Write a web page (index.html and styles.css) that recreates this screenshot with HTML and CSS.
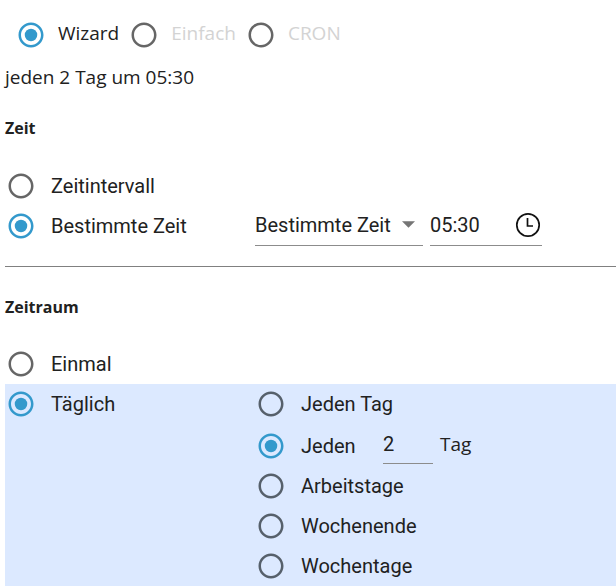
FILE: index.html
```html
<!DOCTYPE html>
<html lang="de">
<head>
<meta charset="utf-8">
<title>Zeitplan</title>
<link rel="stylesheet" href="styles.css">
</head>
<body>
<svg class="symbols" aria-hidden="true">
  <symbol id="radio" viewBox="0 0 24 24">
    <path d="M12 2C6.48 2 2 6.48 2 12s4.48 10 10 10 10-4.48 10-10S17.52 2 12 2zm0 18c-4.42 0-8-3.58-8-8s3.58-8 8-8 8 3.58 8 8-3.58 8-8 8z"/>
    <circle class="dot" cx="12" cy="12" r="5"/>
  </symbol>
</svg>
<form class="schedule">
  <div class="modes">
    <label class="mode"><span class="radio"><input type="radio" name="mode" checked><svg><use href="#radio"/></svg></span>Wizard</label>
    <label class="mode muted"><span class="radio"><input type="radio" name="mode"><svg><use href="#radio"/></svg></span>Einfach</label>
    <label class="mode muted"><span class="radio"><input type="radio" name="mode"><svg><use href="#radio"/></svg></span>CRON</label>
  </div>
  <p class="summary">jeden 2 Tag um 05:30</p>

  <section class="section">
    <h2>Zeit</h2>
    <label class="option"><span class="radio"><input type="radio" name="time"><svg><use href="#radio"/></svg></span>Zeitintervall</label>
    <div class="split">
      <label class="option"><span class="radio"><input type="radio" name="time" checked><svg><use href="#radio"/></svg></span>Bestimmte Zeit</label>
      <div class="fields">
        <div class="field kind">
          <select aria-label="Art der Zeit"><option>Bestimmte Zeit</option></select>
          <svg class="arrow" viewBox="0 0 14 7" aria-hidden="true"><path d="M0 0h14L7 7z"/></svg>
        </div>
        <div class="field time">
          <input type="text" value="05:30" aria-label="Uhrzeit">
          <button type="button" aria-label="Uhrzeit wählen">
            <svg viewBox="0 0 26 26"><circle cx="13" cy="13" r="11.2"/><path d="M12.5 6v8H18"/></svg>
          </button>
        </div>
      </div>
    </div>
  </section>

  <section class="section period">
    <h2>Zeitraum</h2>
    <label class="option"><span class="radio"><input type="radio" name="period"><svg><use href="#radio"/></svg></span>Einmal</label>
    <div class="split active">
      <label class="option"><span class="radio"><input type="radio" name="period" checked><svg><use href="#radio"/></svg></span>Täglich</label>
      <div class="days">
        <label class="option"><span class="radio"><input type="radio" name="days"><svg><use href="#radio"/></svg></span>Jeden Tag</label>
        <div class="every">
          <label class="option"><span class="radio"><input type="radio" name="days" checked><svg><use href="#radio"/></svg></span>Jeden</label>
          <div class="field count"><input id="count" type="text" value="2"></div>
          <label class="unit" for="count">Tag</label>
        </div>
        <label class="option"><span class="radio"><input type="radio" name="days"><svg><use href="#radio"/></svg></span>Arbeitstage</label>
        <label class="option"><span class="radio"><input type="radio" name="days"><svg><use href="#radio"/></svg></span>Wochenende</label>
        <label class="option"><span class="radio"><input type="radio" name="days"><svg><use href="#radio"/></svg></span>Wochentage</label>
      </div>
    </div>
  </section>
</form>
</body>
</html>
```
FILE: styles.css
```css
* { box-sizing: border-box; }

body {
  margin: 0;
  background: #fff;
  color: #212121;
  font: 19px/28px "Segoe UI", "Open Sans", sans-serif;
}

.symbols { position: absolute; width: 0; height: 0; }

.schedule { padding-left: 5px; }

.modes {
  display: flex;
  gap: 10px;
  padding: 20px 0 0 11px;
}

.mode { display: flex; gap: 12px; height: 30px; line-height: 26px; }
.muted { color: #d3d3d3; }

.radio {
  position: relative;
  flex: none;
  width: 30px;
  height: 30px;
  color: #666;
}
.radio input {
  position: absolute;
  inset: 0;
  width: 100%;
  height: 100%;
  margin: 0;
  opacity: 0;
}
.radio svg { display: block; width: 30px; height: 30px; fill: currentColor; }
.radio input:not(:checked) + svg { --dot: 0; }
.radio input:checked + svg { color: #3399cc; }
.dot { opacity: var(--dot, 1); }

.summary { margin: 13px 0 0; }

h2 {
  margin: 0 0 24px;
  font: bold 16px/28px "Segoe UI", "Open Sans", sans-serif;
}

.section {
  padding: 23px 0 20px;
  border-bottom: 1px solid #808080;
}
.period { padding: 26px 0 0; border-bottom: 0; }
.period h2 { margin-bottom: 23px; }

.option {
  display: flex;
  align-items: center;
  gap: 15px;
  height: 40px;
  padding-left: 1px;
  font-family: Roboto, sans-serif;
  font-size: 20px;
}

.split { display: grid; grid-template-columns: 250px 1fr; }
.active { background: #dce9ff; }
.active .radio { color: #56606b; }

.fields { display: flex; gap: 7px; }

.field {
  display: flex;
  align-items: center;
  height: 40px;
  padding-bottom: 2px;
  border-bottom: 1px solid #8c8c8c;
}
.field input,
.field select {
  min-width: 0;
  margin: 0;
  padding: 0;
  border: 0;
  outline: 0;
  background: none;
  color: inherit;
  font: 20px/28px Roboto, sans-serif;
}
.kind { position: relative; width: 168px; }
.kind select { appearance: none; width: 100%; }
.arrow {
  position: absolute;
  right: 8px;
  width: 13px;
  height: 7px;
  fill: #757575;
  pointer-events: none;
}
.time { width: 112px; padding-right: 1px; justify-content: space-between; }
.time input { width: 80px; }
.time button {
  width: 26px;
  height: 26px;
  margin: 0;
  padding: 0;
  border: 0;
  background: none;
}
.time button svg {
  display: block;
  width: 26px;
  height: 26px;
  fill: none;
  stroke: #111;
  stroke-width: 1.7;
}

.every { display: flex; padding-top: 2px; height: 42px; }
.every .option { width: 128px; }
.count { width: 50px; height: 38px; }
.count input { width: 100%; }
.unit { margin-left: 7px; line-height: 36px; }
```
